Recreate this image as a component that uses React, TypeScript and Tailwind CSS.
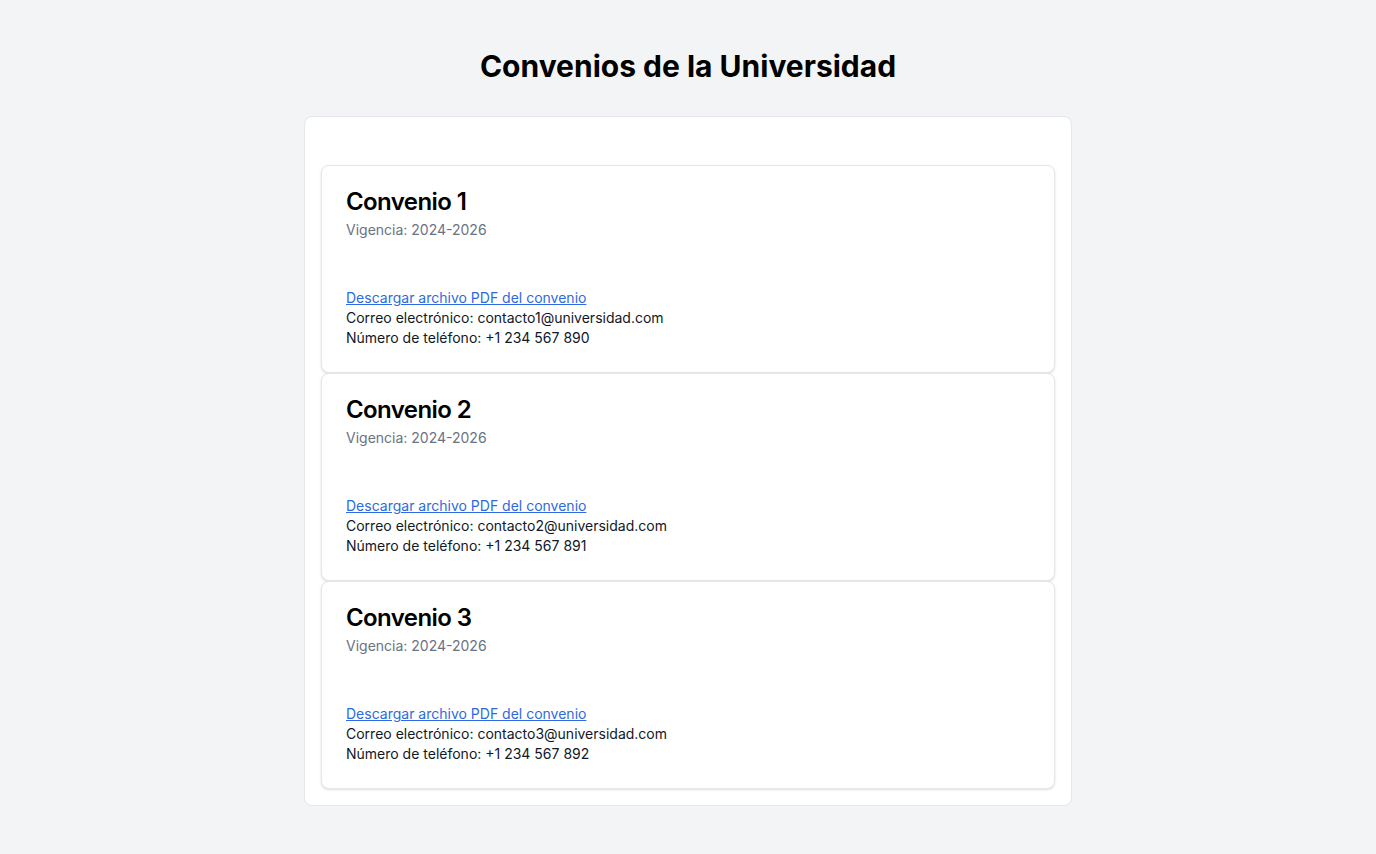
const convenios = [
  { id: 1, vigencia: '2024-2026', correo: 'contacto1@universidad.com', telefono: '+1 234 567 890' },
  { id: 2, vigencia: '2024-2026', correo: 'contacto2@universidad.com', telefono: '+1 234 567 891' },
  { id: 3, vigencia: '2024-2026', correo: 'contacto3@universidad.com', telefono: '+1 234 567 892' },
];

export default function App() {
  return (
    <div className="min-h-screen bg-gray-100 pt-12 pb-12 font-['Inter',sans-serif] text-gray-900">
      <h1 className="mb-8 text-center text-3xl font-bold text-black">Convenios de la Universidad</h1>

      <div className="mx-auto max-w-3xl rounded-lg border border-gray-200 bg-white px-4 pt-12 pb-4">
        {convenios.map((c) => (
          <div key={c.id} className="rounded-lg border border-gray-200 bg-white shadow-sm">
            {/* header */}
            <div className="flex flex-col gap-1.5 p-6">
              <h2 className="text-2xl leading-none font-semibold tracking-tight text-black">Convenio {c.id}</h2>
              <p className="text-sm text-gray-500">Vigencia: {c.vigencia}</p>
            </div>
            {/* empty content */}
            <div className="px-6 pb-6" />
            {/* footer */}
            <div className="px-6 pb-6 text-sm">
              <a href="#" className="text-[#2f6ae0] underline">
                Descargar archivo PDF del convenio
              </a>
              <p>Correo electrónico: {c.correo}</p>
              <p>Número de teléfono: {c.telefono}</p>
            </div>
          </div>
        ))}
      </div>
    </div>
  );
}
